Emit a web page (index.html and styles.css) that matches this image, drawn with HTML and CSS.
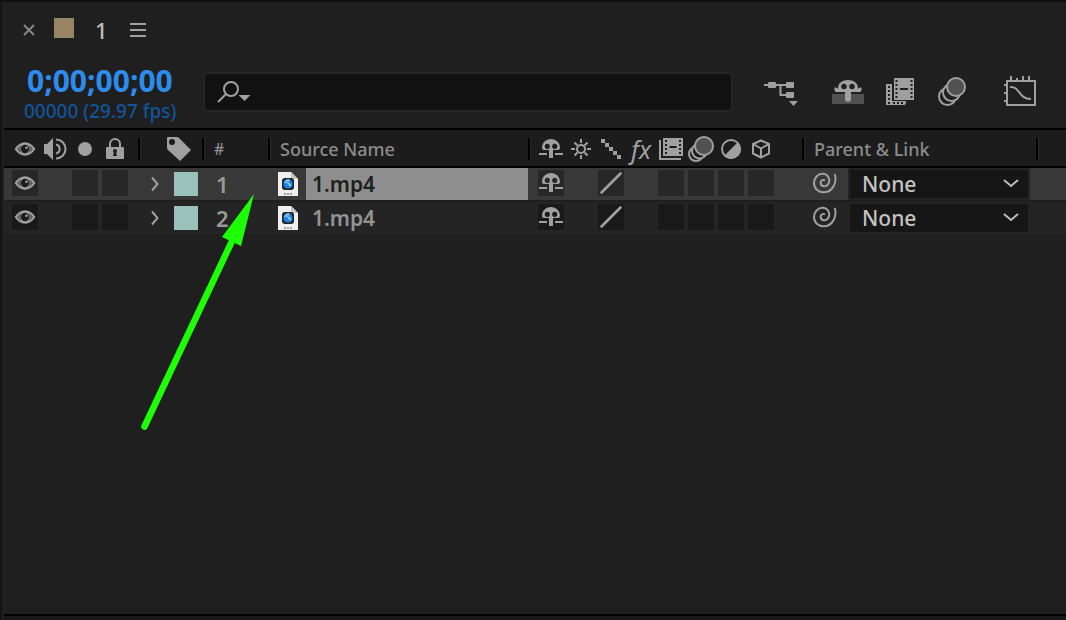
FILE: index.html
```html
<!DOCTYPE html>
<html lang="en">
<head>
    <meta charset="UTF-8">
    <meta name="viewport" content="width=device-width, initial-scale=1.0">
    <title>Timeline</title>
    <link rel="stylesheet" href="styles.css">
</head>
<body>
    <svg class="defs" aria-hidden="true">
        <symbol id="eye" viewBox="0 0 22 14">
            <path d="M.5 7Q5 .3 11 .3T21.500 7Q17 13.700 11 13.700T.5 7Z" fill="currentColor"/>
            <path d="M3 7Q5 4 7.500 3Q5.500 7 7.500 11Q5 10 3 7ZM19 7Q17 4 14.500 3Q16.500 7 14.500 11Q17 10 19 7Z" fill="#1c1c1c" opacity=".5"/>
            <circle cx="11" cy="7" r="4.200" fill="#1c1c1c"/>
            <circle cx="12.500" cy="5.700" r="1.300" fill="currentColor"/>
        </symbol>
        <symbol id="shy" viewBox="0 0 24 20">
            <path fill="currentColor" fill-rule="evenodd" d="M3 9C3 3.500 7 0 12 0s9 3.500 9 9q0 2-2 2h-5v8h-4v-8H5q-2 0-2-2ZM8.300 4.800a2.600 2.600 0 1 0 .01 0ZM15.700 4.800a2.600 2.600 0 1 0 .01 0Z"/>
            <path fill="currentColor" d="M0 14h8v2H0zM16 14h8v2h-8z"/>
        </symbol>
        <symbol id="quality" viewBox="0 0 26 26">
            <path d="M3.500 22.500L22.500 3.500" stroke="currentColor" stroke-width="2.600" stroke-linecap="round"/>
        </symbol>
        <symbol id="whip" viewBox="0 0 24 22">
            <path d="M12 8.300C9.500 7.200 7.200 9 7.700 11.500C8.400 14.800 12.800 15.300 15 12.300C17.800 8.300 15.500 2.200 10 1.800C4.800 1.600 1 6 1 11C1 16.500 5.300 20.300 10.800 20.300C18.500 20.300 24.500 12 21.800 2" fill="none" stroke="currentColor" stroke-width="2"/>
        </symbol>
        <symbol id="twirl" viewBox="0 0 8 16">
            <path d="M1 1.500L6.500 8L1 14.500" fill="none" stroke="currentColor" stroke-width="2"/>
        </symbol>
        <symbol id="file" viewBox="0 0 20 24">
            <path d="M0 0h13l7 7v17H0z" fill="#efefef"/>
            <path d="M13 0v7h7z" fill="#c6c6c6"/>
            <rect x="4" y="6" width="12" height="12" rx="3" fill="#20252b"/>
            <circle cx="10" cy="12" r="4.600" fill="#1b83e4"/>
            <path d="M6 11a4.300 4.300 0 0 1 6-3.500l-2 4z" fill="#6db8fa"/>
            <path d="M9.500 10.500l2.500 1 1.500 3-2.500-1z" fill="#a8d8f8"/>
            <path d="M6 22h2m1 0h2m1 0h2" stroke="#888" stroke-width="1.300"/>
        </symbol>
    </svg>

    <main class="panel">
        <header class="tabs">
            <button class="close" aria-label="Close">
                <svg width="12" height="12"><path d="M1 1l10 10M11 1L1 11" stroke="currentColor" stroke-width="2"/></svg>
            </button>
            <span class="comp-color"></span>
            <span class="comp-name">1</span>
            <button class="menu" aria-label="Panel menu">
                <svg width="16" height="14"><path d="M0 1h16M0 7h16M0 13h16" stroke="currentColor" stroke-width="2"/></svg>
            </button>
        </header>

        <section class="toolbar">
            <div class="time">
                <button class="timecode">0;00;00;00</button>
                <span class="frames">00000 (29.97 fps)</span>
            </div>
            <label class="search">
                <svg width="34" height="22" viewBox="0 0 34 22">
                    <circle cx="14" cy="8" r="7" fill="none" stroke="currentColor" stroke-width="2"/>
                    <path d="M9 13L1 21" stroke="currentColor" stroke-width="2"/>
                    <path d="M21.500 14h12l-6 6z" fill="currentColor"/>
                </svg>
                <input type="text" aria-label="Search layers">
            </label>
            <div class="tools">
                <button class="tool flow" aria-label="Composition mini-flowchart">
                    <svg width="34" height="30" viewBox="0 0 34 30">
                        <path d="M0 9h24M16.500 9v10H24" fill="none" stroke="currentColor" stroke-width="2"/>
                        <rect x="4" y="6" width="8" height="6" rx="1" fill="currentColor"/>
                        <rect x="22" y="6" width="8" height="6" rx="1" fill="currentColor"/>
                        <rect x="22" y="16" width="8" height="6" rx="1" fill="currentColor"/>
                        <path d="M25 25h9l-4.500 5z" fill="currentColor"/>
                    </svg>
                </button>
                <button class="tool" aria-label="Hide shy layers">
                    <svg width="32" height="30" viewBox="0 0 32 30">
                        <path d="M0 18h32v10H0z" fill="#515151"/>
                        <path d="M6 12C6 7 10.500 4 16 4s10 3 10 8q1 1 1.500-.5h2V14q0 2-2 2H4.500q-2 0-2-2v-2.500h2Q5 13 6 12Z" fill="currentColor"/>
                        <circle cx="12" cy="10.500" r="2.700" fill="#1f1f1f"/>
                        <circle cx="20" cy="10.500" r="2.700" fill="#1f1f1f"/>
                        <rect x="13" y="13" width="6" height="13" rx="3" fill="currentColor"/>
                    </svg>
                </button>
                <button class="tool" aria-label="Frame blending">
                    <svg width="28" height="30" viewBox="0 0 28 30">
                        <path d="M0 8h6v17h14v2q0 2-2 2H0z" fill="currentColor"/>
                        <path d="M3 10v18" stroke="#1f1f1f" stroke-width="2" stroke-dasharray="2 2"/>
                        <path d="M7 27h11" stroke="#1f1f1f" stroke-width="2" stroke-dasharray="2 2"/>
                        <path d="M6 1h22v24H6z" fill="#1f1f1f"/>
                        <path d="M8 2h20v22H8z" fill="currentColor"/>
                        <path d="M10.500 4v19M25.500 4v19" stroke="#1f1f1f" stroke-width="2" stroke-dasharray="2 2"/>
                        <path d="M14 13h8" stroke="#1f1f1f" stroke-width="2"/>
                    </svg>
                </button>
                <button class="tool" aria-label="Motion blur">
                    <svg width="28" height="30" viewBox="0 0 28 30" stroke="currentColor" stroke-width="2" fill="#1f1f1f">
                        <circle cx="9.500" cy="20.500" r="8.500"/>
                        <circle cx="13.500" cy="16.500" r="8.500"/>
                        <circle cx="18" cy="11" r="9" fill="#515151"/>
                    </svg>
                </button>
                <button class="tool graph" aria-label="Graph editor">
                    <svg width="32" height="30" viewBox="0 0 32 30" fill="none" stroke="currentColor" stroke-width="2">
                        <path d="M3 5h28v24H3zM7 0v5M13 2v3M19 0v5M25 0v5M0 9h3M0 17h3M0 25h3"/>
                        <path d="M6 11C16 10 14 23 27 23"/>
                    </svg>
                </button>
            </div>
        </section>

        <table class="layers">
            <colgroup>
                <col class="col-av"><col class="col-label"><col class="col-num"><col class="col-name">
                <col class="col-switches"><col class="col-parent"><col>
            </colgroup>
            <thead>
                <tr>
                    <th>
                        <div class="slots">
                            <span class="slot"><svg class="i-eye"><use href="#eye"/></svg></span>
                            <span class="slot">
                                <svg width="24" height="22" viewBox="0 0 24 22">
                                    <path d="M1 6h3l6-6v22l-6-6H1z" fill="currentColor"/>
                                    <path d="M13 6.500a4.600 4.600 0 0 1 0 9M13 1.500a9.500 9.500 0 0 1 0 19" fill="none" stroke="currentColor" stroke-width="2"/>
                                </svg>
                            </span>
                            <span class="slot"><svg width="14" height="14"><circle cx="7" cy="7" r="7" fill="currentColor"/></svg></span>
                            <span class="slot">
                                <svg width="18" height="22" viewBox="0 0 18 22">
                                    <path d="M4 10V6a5 5 0 0 1 10 0v4" fill="none" stroke="currentColor" stroke-width="2"/>
                                    <rect y="9" width="18" height="12" rx="1" fill="currentColor"/>
                                    <circle cx="9" cy="13" r="2" fill="#1c1c1c"/>
                                    <path d="M8 14h2l1 4H7z" fill="#1c1c1c"/>
                                </svg>
                            </span>
                        </div>
                    </th>
                    <th>
                        <div class="head tag">
                            <svg width="24" height="24" viewBox="0 0 24 24">
                                <path d="M0 1q0-1 1-1h9q1 0 2 1l12 12-11 11L1 13q-1-1-1-2z" fill="currentColor"/>
                                <circle cx="5" cy="5" r="3" fill="#1c1c1c"/>
                            </svg>
                        </div>
                    </th>
                    <th><div class="head num">#</div></th>
                    <th><div class="head">Source Name</div></th>
                    <th>
                        <div class="head slots">
                            <span class="slot"><svg class="i-shy"><use href="#shy"/></svg></span>
                            <span class="slot">
                                <svg width="20" height="20" viewBox="0 0 20 20" fill="none" stroke="currentColor" stroke-width="2">
                                    <circle cx="10" cy="10" r="4"/>
                                    <path d="M10 0v4M10 16v4M0 10h4M16 10h4M3.500 3.500l3 3M13.500 13.500l3 3M16.500 3.500l-3 3M6.500 13.500l-3 3"/>
                                </svg>
                            </span>
                            <span class="slot">
                                <svg width="20" height="20"><path d="M0 0h4v4h4v4h4v4h4v4h4v4h-4v-4h-4v-4H8V8H4V4H0z" fill="currentColor"/></svg>
                            </span>
                            <span class="slot fx">fx</span>
                            <span class="slot">
                                <svg width="24" height="22" viewBox="0 0 24 22">
                                    <path d="M1 2v19h21" fill="none" stroke="currentColor" stroke-width="2"/>
                                    <path d="M4 0h20v18H4z" fill="currentColor"/>
                                    <path d="M7 2v15M21 2v15" stroke="#1c1c1c" stroke-width="2" stroke-dasharray="2 2"/>
                                    <path d="M10.500 9h7" stroke="#1c1c1c" stroke-width="2"/>
                                </svg>
                            </span>
                            <span class="slot">
                                <svg width="26" height="26" viewBox="0 0 26 26" stroke="currentColor" stroke-width="2" fill="#1c1c1c">
                                    <circle cx="8" cy="18" r="7"/>
                                    <circle cx="11.500" cy="15" r="7.500"/>
                                    <circle cx="16" cy="10" r="9" fill="#515151"/>
                                </svg>
                            </span>
                            <span class="slot">
                                <svg width="20" height="20" viewBox="0 0 20 20">
                                    <circle cx="10" cy="10" r="9" fill="none" stroke="currentColor" stroke-width="2"/>
                                    <path d="M17 3A9.500 9.500 0 0 1 3 17z" fill="currentColor"/>
                                </svg>
                            </span>
                            <span class="slot">
                                <svg width="20" height="20" viewBox="0 0 20 20">
                                    <path d="M10 1.500l8 3.500v9.500l-8 4-8-4V5zM2 5l8 4.500L18 5M10 9.500v9" fill="none" stroke="currentColor" stroke-width="2" stroke-linejoin="round"/>
                                </svg>
                            </span>
                        </div>
                    </th>
                    <th><div class="head">Parent &amp; Link</div></th>
                    <th><div class="head"></div></th>
                </tr>
            </thead>
            <tbody>
                <tr class="selected">
                    <td>
                        <div class="slots">
                            <button class="box" aria-label="Video"><svg class="i-eye"><use href="#eye"/></svg></button>
                            <span class="blank"></span>
                            <button class="box" aria-label="Solo"></button>
                            <button class="box" aria-label="Lock"></button>
                        </div>
                    </td>
                    <td>
                        <div class="label">
                            <button class="twirl" aria-label="Expand"><svg width="8" height="16"><use href="#twirl"/></svg></button>
                            <button class="swatch" aria-label="Label colour"></button>
                        </div>
                    </td>
                    <td class="index">1</td>
                    <td>
                        <div class="source">
                            <svg width="20" height="24"><use href="#file"/></svg>
                            <span class="name">1.mp4</span>
                        </div>
                    </td>
                    <td>
                        <div class="slots switches">
                            <button class="box" aria-label="Shy"><svg class="i-shy"><use href="#shy"/></svg></button>
                            <span class="blank"></span>
                            <button class="box" aria-label="Quality"><svg width="26" height="26"><use href="#quality"/></svg></button>
                            <span class="blank"></span>
                            <button class="box" aria-label="Frame blend"></button>
                            <button class="box" aria-label="Motion blur"></button>
                            <button class="box" aria-label="Adjustment layer"></button>
                            <button class="box" aria-label="3D layer"></button>
                        </div>
                    </td>
                    <td>
                        <div class="parent">
                            <button class="whip" aria-label="Pick whip"><svg width="24" height="22"><use href="#whip"/></svg></button>
                            <span class="drop">
                                <select aria-label="Parent of layer 1"><option>None</option></select>
                                <svg width="16" height="10"><path d="M1 1l7 6 7-6" fill="none" stroke="currentColor" stroke-width="2"/></svg>
                            </span>
                        </div>
                    </td>
                    <td></td>
                </tr>
                <tr>
                    <td>
                        <div class="slots">
                            <button class="box" aria-label="Video"><svg class="i-eye"><use href="#eye"/></svg></button>
                            <span class="blank"></span>
                            <button class="box" aria-label="Solo"></button>
                            <button class="box" aria-label="Lock"></button>
                        </div>
                    </td>
                    <td>
                        <div class="label">
                            <button class="twirl" aria-label="Expand"><svg width="8" height="16"><use href="#twirl"/></svg></button>
                            <button class="swatch" aria-label="Label colour"></button>
                        </div>
                    </td>
                    <td class="index">2</td>
                    <td>
                        <div class="source">
                            <svg width="20" height="24"><use href="#file"/></svg>
                            <span class="name">1.mp4</span>
                        </div>
                    </td>
                    <td>
                        <div class="slots switches">
                            <button class="box" aria-label="Shy"><svg class="i-shy"><use href="#shy"/></svg></button>
                            <span class="blank"></span>
                            <button class="box" aria-label="Quality"><svg width="26" height="26"><use href="#quality"/></svg></button>
                            <span class="blank"></span>
                            <button class="box" aria-label="Frame blend"></button>
                            <button class="box" aria-label="Motion blur"></button>
                            <button class="box" aria-label="Adjustment layer"></button>
                            <button class="box" aria-label="3D layer"></button>
                        </div>
                    </td>
                    <td>
                        <div class="parent">
                            <button class="whip" aria-label="Pick whip"><svg width="24" height="22"><use href="#whip"/></svg></button>
                            <span class="drop">
                                <select aria-label="Parent of layer 2"><option>None</option></select>
                                <svg width="16" height="10"><path d="M1 1l7 6 7-6" fill="none" stroke="currentColor" stroke-width="2"/></svg>
                            </span>
                        </div>
                    </td>
                    <td></td>
                </tr>
            </tbody>
        </table>
    </main>

    <svg class="arrow" width="120" height="240" viewBox="0 0 120 240" aria-hidden="true">
        <path d="M5.500 236.500L94 49" stroke="#1cff05" stroke-width="6.500" stroke-linecap="round"/>
        <path d="M115 4L83 47l19 9z" fill="#1cff05"/>
    </svg>
</body>
</html>
```

FILE: styles.css
```css
* {
    box-sizing: border-box;
}
body {
    margin: 0;
    background: #1f1f1f;
    color: #a0a0a0;
    font-family: "Noto Sans", sans-serif;
    font-size: 20px;
    overflow: hidden;
}
button, select, input {
    margin: 0;
    padding: 0;
    border: 0;
    background: none;
    color: inherit;
    font: inherit;
}
svg {
    display: block;
    flex: none;
}
.defs {
    position: absolute;
    width: 0;
    height: 0;
}
.panel {
    display: flex;
    flex-direction: column;
    min-height: 100vh;
    padding-left: 2px;
    border-top: 2px solid #111;
    border-left: 2px solid #141414;
}
.panel::after {
    content: "";
    height: 4px;
    margin-top: auto;
    border-top: 2px solid #000;
    background: #1a1718;
}

/* tabs */
.tabs {
    display: flex;
    align-items: center;
    height: 56px;
    padding-left: 19px;
}
.close {
    color: #868686;
}
.comp-color {
    width: 20px;
    height: 20px;
    margin: 0 21px 4px 19px;
    background: #998465;
}
.comp-name {
    margin-right: 22px;
    color: #bdbdbd;
    font-size: 22px;
    font-weight: 500;
}

/* toolbar */
.toolbar {
    display: flex;
    align-items: flex-start;
    height: 70px;
    padding: 4px 30px 0 20px;
}
.time {
    display: flex;
    flex-direction: column;
    width: 179px;
    white-space: nowrap;
}
.timecode {
    padding-left: 3px;
    color: #2d8ceb;
    font-size: 30px;
    font-weight: 700;
    line-height: 38px;
    text-align: left;
}
.frames {
    color: #125499;
    font-size: 19px;
    font-weight: 500;
    line-height: 22px;
}
.search {
    display: flex;
    flex: 1;
    align-items: center;
    height: 40px;
    margin-top: 10px;
    padding-left: 12px;
    border: 2px solid #262626;
    border-radius: 5px;
    background: #111;
}
.search input {
    flex: 1;
    min-width: 0;
    outline: none;
}
.tools {
    display: flex;
    gap: 24px;
    margin-top: 14px;
}
.tool {
    display: flex;
    width: 28px;
}
.flow {
    width: 75px;
    padding-left: 31px;
}
.flow + .tool {
    width: 30px;
}
.graph {
    width: 46px;
    padding-left: 14px;
}

/* layers */
.layers {
    width: 100%;
    table-layout: fixed;
    border-spacing: 0;
}
.col-av { width: 134px; }
.col-label { width: 64px; }
.col-num { width: 66px; }
.col-name { width: 260px; }
.col-switches { width: 274px; }
.col-parent { width: 234px; }
th, td {
    padding: 0;
    text-align: left;
    vertical-align: top;
}
th {
    height: 40px;
    padding-top: 8px;
    border-top: 2px solid #000;
    border-bottom: 2px solid #000;
    background: #1c1c1c;
    color: #8c8c8c;
    font-size: 18px;
    font-weight: 500;
}
th svg, .fx {
    color: #a0a0a0;
}
.head, th .slots {
    display: flex;
    align-items: center;
    height: 22px;
}
.head {
    padding-left: 10px;
    border-left: 2px solid #000;
    box-shadow: inset 1px 0 #2b2b2b;
}
.head.tag {
    padding-left: 27px;
}
.head.num {
    font-size: 16px;
}
.slots {
    display: flex;
    padding-left: 6px;
}
.head.slots {
    padding-left: 6px;
}
.slot {
    display: flex;
    flex: none;
    justify-content: center;
    width: 30px;
}
.fx {
    font-size: 25px;
    font-style: italic;
    font-weight: 400;
    line-height: 22px;
}
.i-eye {
    width: 22px;
    height: 14px;
}
.i-shy {
    width: 24px;
    height: 20px;
}
td {
    height: 34px;
    border-bottom: 2px solid #1f1f1f;
    background: #242424;
}
.selected td {
    background: #383838;
}
td .slots {
    padding-top: 2px;
}
td .switches {
    padding-left: 8px;
}
.box, .blank {
    display: flex;
    flex: none;
    align-items: center;
    justify-content: center;
    width: 26px;
    height: 26px;
    margin: 0 2px;
}
.box {
    background: #191919;
}
.selected .box {
    background: #272727;
}
.label {
    display: flex;
    align-items: center;
    height: 32px;
    padding-left: 13px;
}
.twirl {
    margin-right: 15px;
}
.swatch {
    width: 24px;
    height: 24px;
    background: #9bc1bd;
}
.index {
    padding-left: 14px;
    color: #999;
    font-size: 22px;
    font-weight: 600;
    line-height: 32px;
}
.source {
    display: flex;
    align-items: center;
    height: 32px;
    padding-left: 10px;
}
.name {
    flex: 1;
    margin-left: 8px;
    padding-left: 6px;
    color: #939393;
    font-size: 21px;
    font-weight: 600;
    line-height: 32px;
}
.selected .name {
    background: #8e8e8e;
    color: #1f1f1f;
}
.parent {
    display: flex;
    padding-left: 11px;
}
.whip {
    display: flex;
    margin: 4px 11px 0 0;
}
.drop {
    display: grid;
    flex: 1;
    align-items: center;
    margin-right: 6px;
    border: 2px solid #242424;
    background: #161616;
}
.drop > * {
    grid-area: 1 / 1;
}
.drop select {
    appearance: none;
    width: 100%;
    height: 28px;
    padding-left: 12px;
    color: #c3c3c3;
    font-size: 21px;
    font-weight: 500;
    line-height: 28px;
}
.drop svg {
    justify-self: end;
    margin-right: 9px;
    color: #bdbdbd;
    pointer-events: none;
}

/* pointer lying over the rows */
.arrow {
    position: absolute;
    top: 190px;
    left: 139px;
    pointer-events: none;
}
```
